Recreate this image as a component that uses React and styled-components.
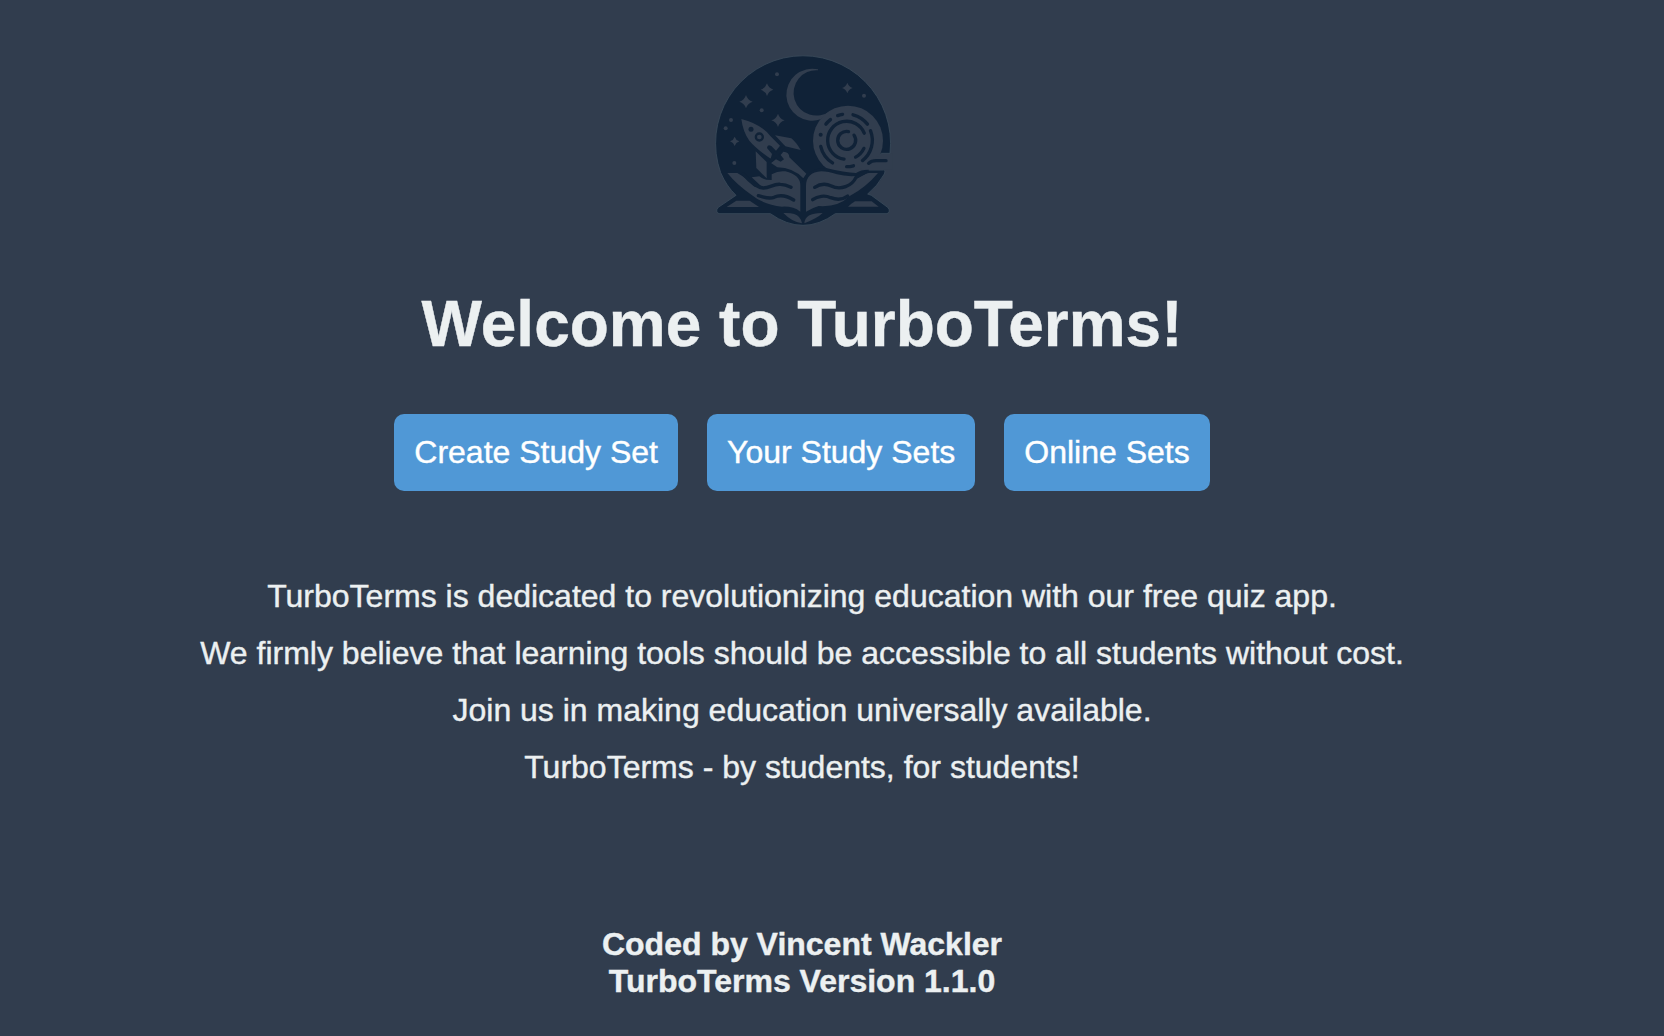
import React from "react";
import styled, { createGlobalStyle } from "styled-components";

const BG = "#313d4e";
const NAVY = "#102237";

const GlobalStyle = createGlobalStyle`
  html, body {
    margin: 0;
    background: ${BG};
  }
  body {
    font-family: "Liberation Sans", Arial, Helvetica, sans-serif;
    color: #ecf0f1;
    overflow: hidden;
    -webkit-text-stroke: 0.4px currentColor;
  }
`;

const Page = styled.main`
  box-sizing: border-box;
  width: 1604px;
  height: 1036px;
  padding-top: 46px;
  display: flex;
  flex-direction: column;
  align-items: center;
  text-align: center;
`;

const LogoArt = styled.svg`
  display: block;
  width: 200px;
  height: 190px;
  flex: none;
`;

const Title = styled.h1`
  margin: 51px 0 0;
  font-size: 64px;
  line-height: 74px;
  font-weight: 700;
  white-space: nowrap;
`;

const Actions = styled.nav`
  display: flex;
  gap: 29px;
  margin-top: 53px;
`;

const ActionButton = styled.button`
  height: 77px;
  padding: 0 20px;
  border: 0;
  border-radius: 10px;
  background: #5098d6;
  color: #fff;
  font: inherit;
  font-size: 32px;
  line-height: 77px;
  white-space: nowrap;
  cursor: pointer;
  -webkit-text-stroke: 0.4px currentColor;
`;

const Mission = styled.section`
  margin-top: 87px;
`;

const MissionLine = styled.p`
  margin: 0 0 20px;
  font-size: 32px;
  line-height: 37px;
  white-space: nowrap;
`;

const Footer = styled.footer`
  margin-top: 120px;
  font-size: 32px;
  line-height: 37px;
  font-weight: 700;
`;

const polar = (r, deg) => {
  const a = (deg * Math.PI) / 180;
  return `${(434 + r * Math.cos(a)).toFixed(1)} ${(283 + r * Math.sin(a)).toFixed(1)}`;
};

/* Clockwise arc around the planet's centre, angles in degrees. */
const arc = (r, from, to) =>
  `M${polar(r, from)} A${r} ${r} 0 ${to - from > 180 ? 1 : 0} 1 ${polar(r, to)}`;

const star = (x, y, s) => {
  const k = s * 0.24;
  return `M${x} ${y - s} Q${x + k} ${y - k} ${x + s} ${y} Q${x + k} ${y + k} ${x} ${y + s} Q${x - k} ${y + k} ${x - s} ${y} Q${x - k} ${y - k} ${x} ${y - s}Z`;
};

const STARS = [[132, 167, 20], [195, 131, 19], [228, 223, 20], [98, 286, 14], [436, 126, 16]];
const DOTS = [[225, 85], [179, 193], [87, 222], [71, 247], [97, 351], [486, 149]];
const RINGS = [
  [27, -35, 282],
  [57, 98, 338],
  [57, 25, 62],
  [79, 218, 232],
  [79, 250, 261],
  [79, 284, 322],
  [77, 338, 412],
  [80, 122, 167],
  [79, 75, 90],
];

function Logo() {
  return (
    <LogoArt viewBox="0 0 600 570" role="img" aria-label="TurboTerms logo">
      <path
        fill={NAVY}
        stroke="#3a4a5a"
        strokeWidth="2.5"
        d="M56 380 A262.5 262.5 0 1 1 564 322 L538 322 L480 372 L545 372 Q552 374 547 384 Q527 420 497 444 L508 448 L557 484 Q568 497 555 503 L400 503 Q352 538 303 538 Q254 538 205 503 L51 503 Q38 497 49 484 L102 448 Q73 420 56 380Z"
      />
      <g fill={BG}>
        <path d="M348 70 A78 78 0 1 0 356 220 L385 194 A68 68 0 1 1 348 73Z" />
        <circle cx="438" cy="284" r="105" />
        <path d="M538 323 L572 323 L572 371 L470 371Z" />
        {STARS.map(([x, y, s]) => <path key={`${x}-${y}`} d={star(x, y, s)} />)}
        {DOTS.map(([x, y]) => <circle key={`${x}-${y}`} cx={x} cy={y} r="6" />)}
        <path d="M118 219 Q177 234 205 270 L234 299 L222 314 L208 300 Q196 293 195 306 L210 324 L206 338 Q163 309 142 284 Q123 258 118 219Z" />
        <path d="M219 268 L268 277 Q283 289 296 312 L250 301Z" />
        <path d="M161 316 L194 348 L194 397 L163 366Z" />
        <path d="M244 317 Q262 318 262 334 L313 383 L304 397 Q273 365 226 364 L207 351 L222 340 L236 347 L246 340 L236 327Z" />
      </g>
      <path fill={NAVY} d="M300 403 Q325 365 372 366 Q428 380 462 381 Q475 371 500 371 L500 400 L440 400 L320 420Z" />
      <g fill={BG}>
        <path d="M76 381 L106 381 Q139 400 158 422 L178 421 L149 394 L172 391 Q184 402 209 402 L209 385 Q230 373 250 376 Q296 387 295 420 L295 497 Q273 480 240 482 Q184 476 148 446 Q105 417 76 381Z" />
        <path d="M312 497 L312 420 Q312 379 358 376 Q378 376 405 385 Q430 392 463 390 L462 400 Q485 383 500 381 L528 381 Q492 424 442 451 Q410 484 350 480 Q330 486 312 497Z" />
        <path d="M74 483 L103 464 L143 464 L171 483Z" />
        <path d="M438 482 Q448 473 459 466 L509 466 L530 482Z" />
        <path d="M244 501 Q280 499 291 513 Q299 522 300 532 Q270 528 244 501Z" />
        <path d="M307 532 Q309 500 362 501 Q347 516 307 532Z" />
      </g>
      <g fill="none" stroke={NAVY} strokeWidth="10" strokeLinecap="round" strokeLinejoin="round">
        {RINGS.map(([r, a, b]) => <path key={`${r}-${a}`} d={arc(r, a, b)} />)}
        <path d="M124 384 Q158 425 184 426 C205 426 213 413 235 415 Q250 415 267 424" />
        <path d="M169 449 C190 454 200 460 216 454 C237 444 254 449 275 462" />
        <path d="M338 424 C352 415 371 412 388 420 C415 434 450 420 462 394 L490 379" />
        <path d="M332 461 C347 450 369 447 386 455 C407 463 424 460 437 450" />
        <path d="M500 352 Q508 344 523 344 L552 344" />
        <path d="M207 344 L244 303 M219 322 L231 335" />
        <circle cx="172" cy="273" r="10.5" strokeWidth="7" />
      </g>
      <circle cx="147" cy="250" r="7.5" fill={NAVY} />
      <circle cx="356" cy="266" r="6" fill={NAVY} />
    </LogoArt>
  );
}

const ACTIONS = ["Create Study Set", "Your Study Sets", "Online Sets"];

const MISSION = [
  "TurboTerms is dedicated to revolutionizing education with our free quiz app.",
  "We firmly believe that learning tools should be accessible to all students without cost.",
  "Join us in making education universally available.",
  "TurboTerms - by students, for students!",
];

export default function App() {
  return (
    <>
      <GlobalStyle />
      <Page>
        <Logo />
        <Title>Welcome to TurboTerms!</Title>
        <Actions>
          {ACTIONS.map((label) => <ActionButton key={label}>{label}</ActionButton>)}
        </Actions>
        <Mission>
          {MISSION.map((line) => <MissionLine key={line}>{line}</MissionLine>)}
        </Mission>
        <Footer>
          <div>Coded by Vincent Wackler</div>
          <div>TurboTerms Version 1.1.0</div>
        </Footer>
      </Page>
    </>
  );
}
